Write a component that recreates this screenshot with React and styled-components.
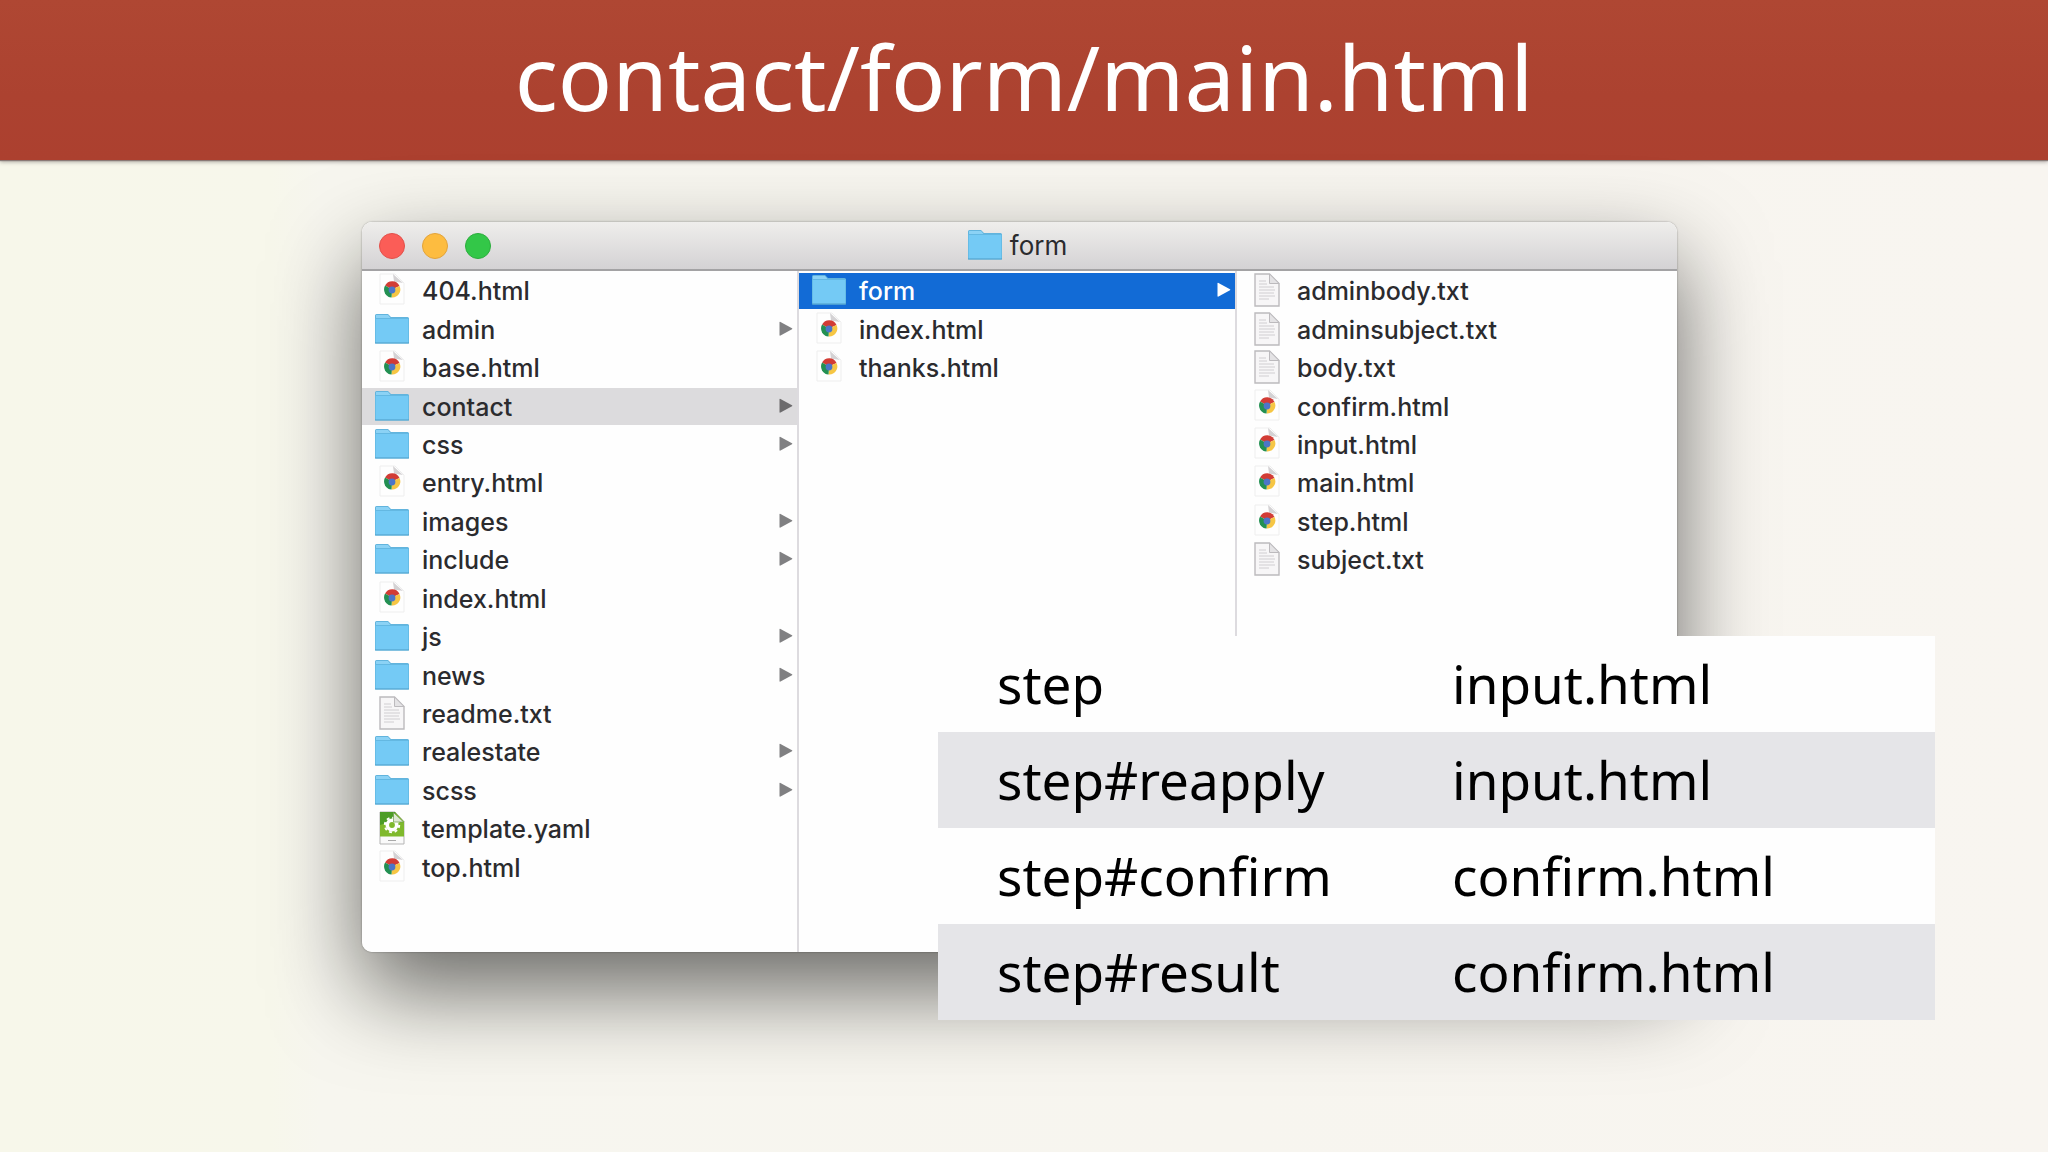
import React from "react";
import styled, { createGlobalStyle } from "styled-components";

const GlobalStyle = createGlobalStyle`
  *, *::before, *::after { box-sizing: border-box; }
  body {
    margin: 0;
    background: #f7f5ef;
    font-family: Inter, "Liberation Sans", sans-serif;
    color: #2b2b2e;
  }
`;

const Slide = styled.main`
  min-height: 100vh;
  display: flex;
  flex-direction: column;
  background: linear-gradient(to right, #f7f7ea 0, #f7f7eb 270px, #f7f6ef 320px, #f7f5ef 60%, #f8f5f0 100%);
`;

const Banner = styled.header`
  height: 160px;
  padding-bottom: 8px;
  display: flex;
  align-items: center;
  justify-content: center;
  background: linear-gradient(#af4733, #ac4230 60%, #ac402f);
  box-shadow: 0 1px 1px #8a7a76, 0 2px 4px rgba(60, 50, 50, 0.4);
`;

const Heading = styled.h1`
  margin: 0;
  font: 400 90px/120px "Noto Sans", sans-serif;
  color: #fff;
`;

const Stage = styled.section`
  padding: 62px 371px 0 362px;
`;

const Frame = styled.div`
  position: relative;
`;

const Finder = styled.div`
  overflow: hidden;
  border-radius: 10px;
  background: #fefefe;
`;

const FinderShadow = styled.div`
  border-radius: 10px;
  box-shadow: 0 0 2px rgba(0, 0, 0, 0.4), 0 38px 88px rgba(0, 0, 0, 0.58);
`;

const TitleBar = styled.div`
  height: 49px;
  padding: 0 17px;
  display: grid;
  grid-template-columns: 1fr auto 1fr;
  align-items: center;
  background: linear-gradient(#efeeec, #d4d2d4);
  border-bottom: 2px solid #a3a2a4;
`;

const Lights = styled.div`
  display: flex;
  gap: 17px;
`;

const Light = styled.button`
  width: 26px;
  height: 26px;
  padding: 0;
  border: 1px solid ${(p) => p.$edge};
  border-radius: 50%;
  background: ${(p) => p.$fill};
`;

const WindowTitle = styled.div`
  display: flex;
  align-items: center;
  gap: 8px;
  padding-right: 4px;
  font-size: 26px;
  line-height: 36px;
`;

const Columns = styled.div`
  min-height: 681px;
  display: grid;
  grid-template-columns: 437fr 438fr 440fr;
`;

const List = styled.ul`
  height: 616px;
  margin: 0;
  padding: 1px 0 0;
  list-style: none;
  display: grid;
  grid-template-rows: repeat(16, 1fr);
`;

const Column = styled.div`
  border-right: 2px solid #dddbdf;
  &:last-child { border-right: 0; }
`;

const Row = styled.li`
  margin: 1px 0;
  padding: 0 4px 0 13px;
  display: grid;
  grid-template-columns: 34px 1fr 14px;
  column-gap: 13px;
  align-items: center;
  font-size: 25px;
  font-weight: 500;
  line-height: 36px;
  white-space: nowrap;
  background: ${(p) => (p.$state === "active" ? "#126bd6" : p.$state === "open" ? "#dcdbdd" : "transparent")};
  color: ${(p) => (p.$state === "active" ? "#fff" : "inherit")};
  --arrow: ${(p) => (p.$state === "active" ? "#fff" : p.$state === "open" ? "#6c6b6d" : "#808082")};
`;

const Icon = styled.svg`
  display: block;
  width: 34px;
  height: 34px;
  margin-bottom: 2px;
`;

const Arrow = styled.svg`
  display: block;
  width: 14px;
  height: 16px;
  margin-bottom: 2px;
  fill: var(--arrow);
`;

const StepTable = styled.table`
  position: absolute;
  left: 576px;
  right: -258px;
  bottom: -68px;
  width: calc(100% - 318px);
  border-collapse: collapse;
  table-layout: fixed;
  background: #fefefe;
  color: #000;
  font: 400 53px/60px "Noto Sans", sans-serif;
  font-variant-ligatures: none;
`;

const StepRow = styled.tr`
  height: 96px;
  background: ${(p) => (p.$shade ? "#e5e5e8" : "#fefefe")};
`;

const StepCell = styled.td`
  padding: 0 0 0 59px;
  text-align: left;
`;

const KeyCell = styled(StepCell).attrs({ as: "th", scope: "row" })`
  width: 455px;
  font-weight: 400;
`;

const FolderIcon = () => (
  <Icon viewBox="0 0 34 34" aria-hidden="true">
    <path d="M0 3.5Q0 2 1.500 2H13L16 5H32.500Q34 5 34 6.500V10H0Z" fill="#62b4dd" />
    <path d="M1 3H13L15.500 6H33V9H1Z" fill="#8bd2f5" />
    <path d="M0 7H34V30.500Q34 31.500 33 31.500H1Q0 31.500 0 30.500Z" fill="#74caf5" />
    <path d="M0 6.500H34" stroke="#63b8e2" />
    <path d="M0.500 7V31M33.500 7V31" stroke="#66bce6" />
    <path d="M0 31H34" stroke="#4c9dc6" />
  </Icon>
);

const ChromeIcon = () => (
  <Icon viewBox="0 0 34 34" aria-hidden="true">
    <path d="M5 1H20L29 10V31H5Z" fill="#fefefe" stroke="#eeeeee" />
    <path d="M18 1L28 10L19 8.500Z" fill="#d4d2d4" />
    <path d="M17 16.500L10.100 12.500A8 8 0 0 1 24.500 13Z" fill="#d23c35" />
    <path d="M17 16.500L24.500 13A8 8 0 0 1 16.500 24.500Z" fill="#f6c644" />
    <path d="M17 16.500L16.500 24.500A8 8 0 0 1 10.100 12.500Z" fill="#239052" />
    <circle cx="17" cy="17" r="3.400" fill="#4c76c8" />
  </Icon>
);

const TextIcon = () => (
  <Icon viewBox="0 0 34 34" aria-hidden="true">
    <path d="M5 1H19.500L29 10.500V33H5Z" fill="#f7f6f7" stroke="#bcbabd" strokeWidth="1.400" />
    <path d="M19.500 1V10.500H29Z" fill="#e4e3e5" stroke="#bcbabd" />
    <path d="M9 8H16M9 11H17M9 14H24M9 17H25M9 20H24M9 23H25M9 26H19" stroke="#d0ced1" />
  </Icon>
);

const YamlIcon = () => (
  <Icon viewBox="0 0 34 34" aria-hidden="true">
    <path d="M5 1H20L29 10.500V33H5Z" fill="#fafafa" stroke="#b5b5b5" />
    <path d="M5 1H20L29 10.500V25.500H5Z" fill="#7fb92c" />
    <path d="M5 1H20L22 9L5 14Z" fill="#4c9c27" />
    <circle cx="17" cy="14" r="4.700" fill="none" stroke="#fff" strokeWidth="3.600" />
    <circle cx="17" cy="14" r="7.200" fill="none" stroke="#fff" strokeWidth="2" strokeDasharray="2.900 2.750" />
    <path d="M18.500 1.500V11H28.500Z" fill="#dfe8d4" stroke="#6f9c4b" strokeWidth="0.700" />
    <path d="M13 29.500H21" stroke="#aaa" />
  </Icon>
);

const ICONS = { folder: FolderIcon, html: ChromeIcon, txt: TextIcon, yaml: YamlIcon };

const kindOf = (name) => (name.includes(".") ? name.split(".").pop() : "folder");

const COLUMNS = [
  {
    selected: "contact",
    state: "open",
    files: [
      "404.html", "admin", "base.html", "contact", "css", "entry.html", "images", "include",
      "index.html", "js", "news", "readme.txt", "realestate", "scss", "template.yaml", "top.html",
    ],
  },
  { selected: "form", state: "active", files: ["form", "index.html", "thanks.html"] },
  {
    files: [
      "adminbody.txt", "adminsubject.txt", "body.txt", "confirm.html",
      "input.html", "main.html", "step.html", "subject.txt",
    ],
  },
];

const STEPS = [
  ["step", "input.html"],
  ["step#reapply", "input.html"],
  ["step#confirm", "confirm.html"],
  ["step#result", "confirm.html"],
];

const FileRow = ({ name, state }) => {
  const kind = kindOf(name);
  const Glyph = ICONS[kind];
  return (
    <Row $state={state}>
      <Glyph />
      <span>{name}</span>
      {kind === "folder" && (
        <Arrow viewBox="0 0 14 16" aria-hidden="true">
          <path d="M0.500 1.500Q0.500 0.500 1.500 1L13 7.200Q13.800 7.700 13 8.200L1.500 14.500Q0.500 15 0.500 14Z" />
        </Arrow>
      )}
    </Row>
  );
};

export default function App() {
  return (
    <>
      <GlobalStyle />
      <Slide>
        <Banner>
          <Heading>contact/form/main.html</Heading>
        </Banner>
        <Stage>
          <Frame>
            <FinderShadow>
              <Finder>
                <TitleBar>
                  <Lights>
                    <Light aria-label="Close" $fill="#fb5d57" $edge="#e2504a" />
                    <Light aria-label="Minimize" $fill="#fdbc40" $edge="#e2a33a" />
                    <Light aria-label="Zoom" $fill="#33c748" $edge="#2bad3c" />
                  </Lights>
                  <WindowTitle>
                    <FolderIcon />
                    <span>form</span>
                  </WindowTitle>
                </TitleBar>
                <Columns>
                  {COLUMNS.map((column, i) => (
                    <Column key={i}>
                      <List>
                        {column.files.map((name) => (
                          <FileRow
                            key={name}
                            name={name}
                            state={name === column.selected ? column.state : undefined}
                          />
                        ))}
                      </List>
                    </Column>
                  ))}
                </Columns>
              </Finder>
            </FinderShadow>
            <StepTable>
              <tbody>
                {STEPS.map(([step, file], i) => (
                  <StepRow key={step} $shade={i % 2 === 1}>
                    <KeyCell>{step}</KeyCell>
                    <StepCell>{file}</StepCell>
                  </StepRow>
                ))}
              </tbody>
            </StepTable>
          </Frame>
        </Stage>
      </Slide>
    </>
  );
}
